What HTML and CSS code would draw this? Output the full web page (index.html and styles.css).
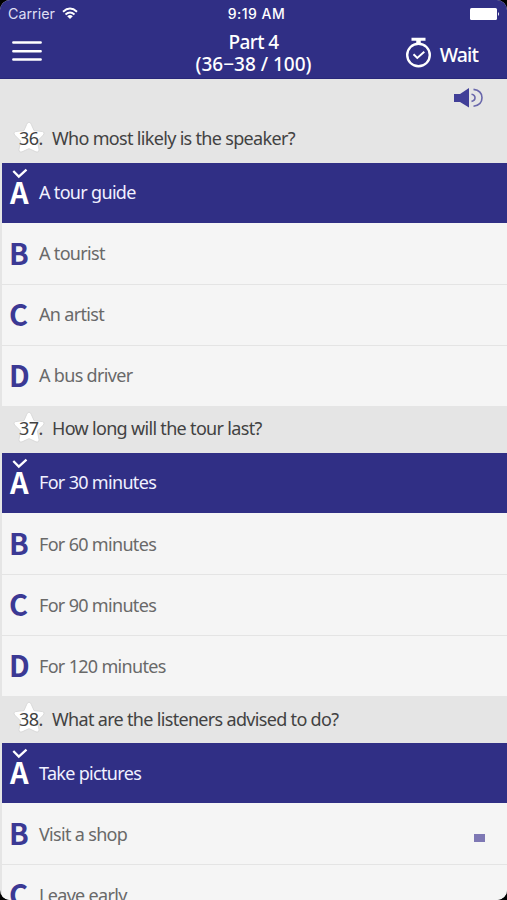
FILE: index.html
```html
<!DOCTYPE html>
<html lang="en">
<head>
<meta charset="utf-8">
<title>Part 4</title>
<link rel="stylesheet" href="styles.css">
</head>
<body>
<svg class="defs" width="0" height="0">
  <symbol id="star" viewBox="0 0 32 32"><path d="M16 1.2 Q17.4 1.2 18.2 3.2 L21 9.6 L29.5 10.6 Q32.5 11.5 30.3 14 L24.4 20 L26 28.6 Q26 31.8 22.9 30.8 L16 27.6 L9.1 30.8 Q6 31.8 6 28.6 L7.6 20 L1.7 14 Q-.5 11.5 2.5 10.6 L11 9.6 L13.8 3.2 Q14.6 1.2 16 1.2Z" fill="#fff" stroke="#d4d4d4" stroke-width=".8"/></symbol>
  <symbol id="check" viewBox="0 0 16 11"><path d="M1.3 3 L6.8 8.6 L14.5 1.6" fill="none" stroke="#fff" stroke-width="2.3"/></symbol>
</svg>
<div class="screen">
  <header class="header">
    <div class="status">
      <div class="carrier">Carrier
        <svg width="16" height="13" viewBox="0 0 16 13" fill="none" stroke="#fff" stroke-width="1.9"><path d="M1 4.8 Q8-1.6 15 4.8M3.5 7.5 Q8 3.5 12.5 7.5"/><path d="M8 12 L5.2 9.2 Q8 7 10.8 9.2Z" fill="#fff" stroke="none"/></svg>
      </div>
      <div class="time">9:19 AM</div>
      <svg class="battery" width="30" height="12" viewBox="0 0 30 12" fill="#fff"><rect x="0" y="0" width="27" height="12" rx="1.5"/><path d="M28 4 Q30 6 28 8Z"/></svg>
    </div>
    <div class="nav">
      <svg class="menu" width="30" height="22" viewBox="0 0 30 22" stroke="#fff" stroke-width="2.4" stroke-linecap="round"><path d="M1.3 2.5H28.7M1.3 11.2H28.7M1.3 19.5H28.7"/></svg>
      <h1 class="title"><span class="part">Part 4</span><span class="range">(36−38 / 100)</span></h1>
      <div class="wait">
        <svg width="27" height="31" viewBox="0 0 27 31" fill="none" stroke="#fff"><circle cx="13.5" cy="18" r="11.3" stroke-width="2.4"/><path d="M6.5 2.2H20.5" stroke-width="3"/><path d="M13.5 3V7" stroke-width="4.5"/><path d="M8.5 17.2 L12.3 21 L19.3 14.8" stroke-width="2"/></svg>
        <span>Wait</span>
      </div>
    </div>
  </header>
  <div class="audio">
    <svg width="29" height="20" viewBox="0 0 29 20"><path d="M0 6H6L15 0V19.5L6 14H0Z" fill="#413f98"/><path d="M17.5 6.2 Q21 6.8 21 9.8 Q21 12.8 17.5 13.4M19.5 1.4 Q28 2.5 28 9.8 Q28 17.1 19.5 18.3" fill="none" stroke="#6967ab" stroke-width="1.6"/></svg>
  </div>
  <section>
    <h2 class="question"><svg class="star"><use href="#star"/></svg><span class="num">36.</span><span>Who most likely is the speaker?</span></h2>
    <div class="option selected"><b>A<svg class="check"><use href="#check"/></svg></b><span>A tour guide</span></div>
    <div class="option"><b>B</b><span>A tourist</span></div>
    <div class="option"><b>C</b><span>An artist</span></div>
    <div class="option"><b>D</b><span>A bus driver</span></div>
  </section>
  <section>
    <h2 class="question"><svg class="star"><use href="#star"/></svg><span class="num">37.</span><span>How long will the tour last?</span></h2>
    <div class="option selected"><b>A<svg class="check"><use href="#check"/></svg></b><span>For 30 minutes</span></div>
    <div class="option"><b>B</b><span>For 60 minutes</span></div>
    <div class="option"><b>C</b><span>For 90 minutes</span></div>
    <div class="option"><b>D</b><span>For 120 minutes</span></div>
  </section>
  <section>
    <h2 class="question"><svg class="star"><use href="#star"/></svg><span class="num">38.</span><span>What are the listeners advised to do?</span></h2>
    <div class="option selected"><b>A<svg class="check"><use href="#check"/></svg></b><span>Take pictures</span></div>
    <div class="option"><b>B</b><span>Visit a shop</span><i class="marker"></i></div>
    <div class="option"><b>C</b><span>Leave early</span></div>
  </section>
</div>
</body>
</html>
```
FILE: styles.css
```css
* { box-sizing: border-box; }
html, body { margin: 0; height: 900px; background: #000; overflow: hidden; }
body { font-family: "Noto Sans", "Open Sans", sans-serif; }
.defs { position: absolute; }
.screen { height: 900px; overflow: hidden; border-radius: 10px; background: #e5e5e5; }
.header { height: 79px; background: #302f85; color: #fff; border-bottom: 1px solid #282779; }
.status { display: grid; grid-template-columns: 1fr 1fr 1fr; align-items: center; height: 27px; padding: 0 7px 0 8px; font: 14.3px/27px Inter, sans-serif; }
.carrier { display: flex; align-items: center; gap: 7px; color: #dedef3; }
.time { text-align: center; font-weight: 500; font-size: 14px; letter-spacing: .5px; padding-left: 5px; }
.battery { justify-self: end; }
.nav { display: grid; grid-template-columns: 150px 1fr 150px; height: 51px; }
.menu { margin: 13px 0 0 12px; }
.title { display: flex; flex-direction: column; margin: 4px 0 0; font-size: 19px; line-height: 22px; font-weight: 500; text-align: center; letter-spacing: -.6px; }
.range { letter-spacing: 0; }
.wait { display: flex; justify-content: flex-end; gap: 8px; padding: 10px 29px 0 0; font-size: 19.5px; line-height: 35px; font-weight: 500; letter-spacing: -.9px; }
.audio { height: 36.7px; padding: 9px 24px 0 0; text-align: right; line-height: 0; }
.question { display: flex; align-items: center; position: relative; height: 47px; margin: 0; padding: 0 0 2px 19px; font-size: 18px; font-weight: 400; letter-spacing: -.68px; color: #424242; white-space: pre; }
.question span { position: relative; }
.star { position: absolute; left: 13px; top: 5px; width: 32px; height: 32px; }
.num { width: 33px; letter-spacing: -.5px; }
.option { display: flex; align-items: center; height: 61.1px; margin-left: 2px; padding: 0 0 1px 7px; background: #f5f5f5; border-top: 1px solid #e4e4e4; color: #696969; font-size: 18px; letter-spacing: -.68px; }
.option b { position: relative; width: 30px; padding-bottom: 3px; font-family: "Noto Sans CJK KR", sans-serif; font-size: 29px; line-height: 30px; font-weight: 700; letter-spacing: 0; color: #3b3994; }
.selected { height: 60px; background: #302f85; color: #f1f1ff; border: 0; }
.selected b { padding-left: 1px; color: #fff; }
.selected + .option { border-top-color: #f5f5f5; }
.check { position: absolute; left: 3px; top: -8px; width: 16px; height: 11px; }
.marker { width: 11px; height: 8px; margin: 9px 22px 0 auto; background: #7e78b4; }
```
